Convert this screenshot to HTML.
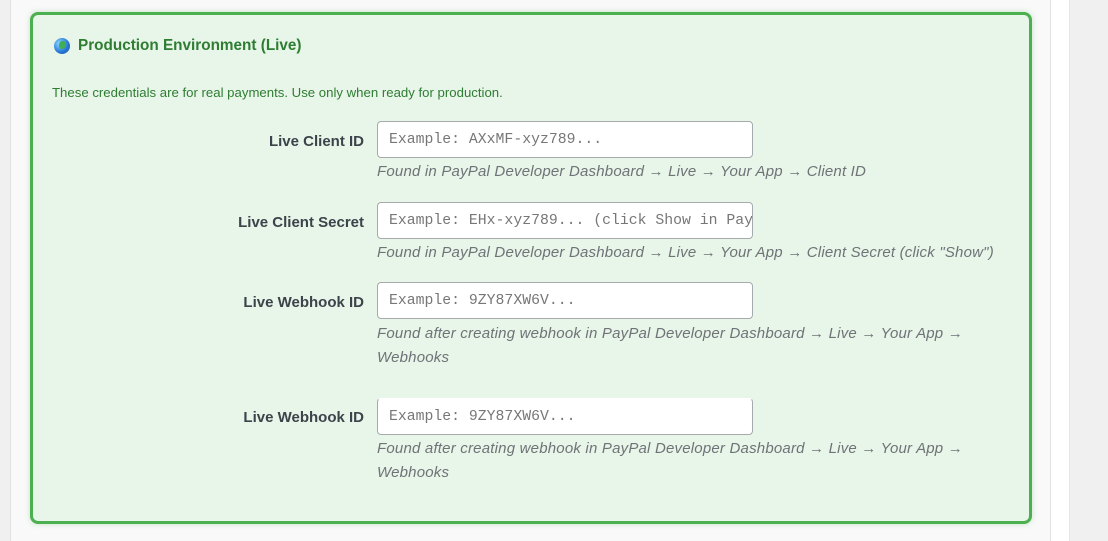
<!DOCTYPE html>
<html style="width:1108px;height:541px;overflow:hidden"><head><meta charset="utf-8"><style>
*{box-sizing:border-box;margin:0;padding:0}
body{width:1108px;height:541px;overflow:hidden;background:#f0f0f1;position:relative;font-family:"Liberation Sans",sans-serif}
.panel{position:absolute;left:10px;top:-2px;width:1041px;height:545px;background:#f9f9f9;border:1px solid #e2e2e2}
.white{position:absolute;left:1051px;top:0;width:19px;height:541px;background:#fff;border-right:1px solid #e6e6e6}
.box{position:absolute;left:30px;top:12px;width:1002px;height:512px;background:#e8f5e9;border:3px solid #4caf50;border-radius:8px;box-shadow:0 0 6px rgba(76,175,80,.3)}
.title{position:absolute;left:54px;top:37px;font-size:15.3px;font-weight:bold;color:#2e7d32;display:flex;align-items:center}
.globe{width:16px;height:16px;border-radius:50%;background:radial-gradient(circle at 35% 35%,#8fd9ff,#2b7bd8 55%,#1a4fa0);margin-right:8px;position:relative;overflow:hidden}
.globe:after{content:"";position:absolute;left:5px;top:3px;width:7px;height:8px;background:#3fae55;border-radius:50% 40% 60% 40%}
.sub{position:absolute;left:52px;top:85px;font-size:13.2px;color:#2e7d32}
.lbl{position:absolute;right:744px;font-size:15px;font-weight:bold;color:#3c434a}
.inp{position:absolute;left:377px;width:376px;height:37px;background:#fff;border:1px solid #a7aaad;border-radius:4px;font-family:"Liberation Mono",monospace;font-size:14.8px;color:#777;padding:10px 11px 0;white-space:nowrap;overflow:hidden}
.desc{position:absolute;left:377px;width:640px;font-size:15px;font-style:italic;color:#6f7377;line-height:24px;letter-spacing:0.2px}
</style></head><body>
<div class="panel"></div>
<div class="white"></div>
<div class="box"></div>
<div class="title"><span class="globe"></span>Production Environment (Live)</div>
<div class="sub">These credentials are for real payments. Use only when ready for production.</div>

<div class="lbl" style="top:133px">Live Client ID</div>
<div class="inp" style="top:121px">Example: AXxMF-xyz789...</div>
<div class="desc" style="top:160px">Found in PayPal Developer Dashboard → Live → Your App → Client ID</div>

<div class="lbl" style="top:214px">Live Client Secret</div>
<div class="inp" style="top:202px">Example: EHx-xyz789... (click Show in PayPal)</div>
<div class="desc" style="top:241px">Found in PayPal Developer Dashboard → Live → Your App → Client Secret (click "Show")</div>

<div class="lbl" style="top:294px">Live Webhook ID</div>
<div class="inp" style="top:282px">Example: 9ZY87XW6V...</div>
<div class="desc" style="top:322px">Found after creating webhook in PayPal Developer Dashboard → Live → Your App →<br>Webhooks</div>

<div class="lbl" style="top:409px">Live Webhook ID</div>
<div class="inp" style="top:398px;border-top-color:#fff">Example: 9ZY87XW6V...</div>
<div class="desc" style="top:437px">Found after creating webhook in PayPal Developer Dashboard → Live → Your App →<br>Webhooks</div>
</body></html>
